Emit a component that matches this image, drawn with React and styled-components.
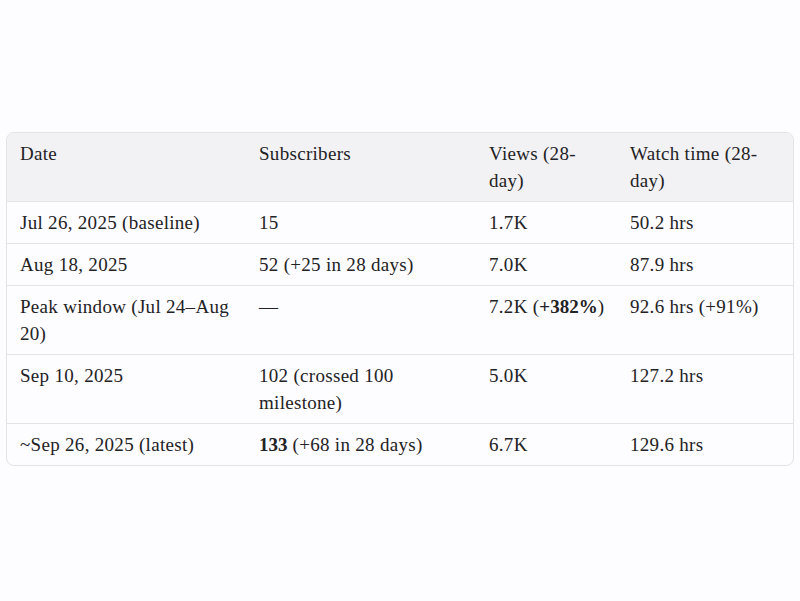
import React from "react";
import styled, { createGlobalStyle } from "styled-components";

const GlobalStyle = createGlobalStyle`
  html, body {
    margin: 0;
    padding: 0;
    background: #fdfcfe;
  }
  body {
    font-family: "Liberation Serif", "Times New Roman", serif;
    color: #232225;
  }
`;

const Page = styled.div`
  padding: 132px 6px;
`;

const Frame = styled.div`
  border: 1px solid #e4e2e7;
  border-radius: 8px;
  overflow: hidden;
  background: #fdfcfe;
`;

const Table = styled.table`
  width: 100%;
  border-collapse: collapse;
  table-layout: fixed;
  font-size: 19px;
  line-height: 27px;
  letter-spacing: 0.3px;
`;

const Head = styled.thead`
  background: #f2f1f3;
`;

const Row = styled.tr`
  & + & {
    border-top: 1px solid #e4e2e7;
  }
`;

const HeadCell = styled.th`
  text-align: left;
  font-weight: 400;
  vertical-align: top;
  padding: 7px 13px;
  border-bottom: 1px solid #e4e2e7;
`;

const Cell = styled.td`
  vertical-align: top;
  padding: 7px 13px;
`;

const Strong = styled.b`
  font-weight: 700;
  letter-spacing: 0;
`;

const Keep = styled.span`
  white-space: nowrap;
`;

const columns = [
  { label: "Date", width: 239 },
  { label: "Subscribers", width: 230 },
  { label: "Views (28-day)", width: 141 },
  { label: "Watch time (28-day)", width: 178 },
];

const rows = [
  ["Jul 26, 2025 (baseline)", "15", "1.7K", "50.2 hrs"],
  ["Aug 18, 2025", "52 (+25 in 28 days)", "7.0K", "87.9 hrs"],
  [
    "Peak window (Jul 24–Aug 20)",
    "—",
    <Keep>
      7.2K (<Strong>+382%</Strong>)
    </Keep>,
    "92.6 hrs (+91%)",
  ],
  ["Sep 10, 2025", "102 (crossed 100 milestone)", "5.0K", "127.2 hrs"],
  [
    "~Sep 26, 2025 (latest)",
    <>
      <Strong>133</Strong> (+68 in 28 days)
    </>,
    "6.7K",
    "129.6 hrs",
  ],
];

export default function App() {
  return (
    <>
      <GlobalStyle />
      <Page>
        <Frame>
          <Table>
            <colgroup>
              {columns.map((c) => (
                <col key={c.label} style={{ width: c.width }} />
              ))}
            </colgroup>
            <Head>
              <tr>
                {columns.map((c) => (
                  <HeadCell key={c.label}>{c.label}</HeadCell>
                ))}
              </tr>
            </Head>
            <tbody>
              {rows.map((r, i) => (
                <Row key={i}>
                  {r.map((v, j) => (
                    <Cell key={j}>{v}</Cell>
                  ))}
                </Row>
              ))}
            </tbody>
          </Table>
        </Frame>
      </Page>
    </>
  );
}
